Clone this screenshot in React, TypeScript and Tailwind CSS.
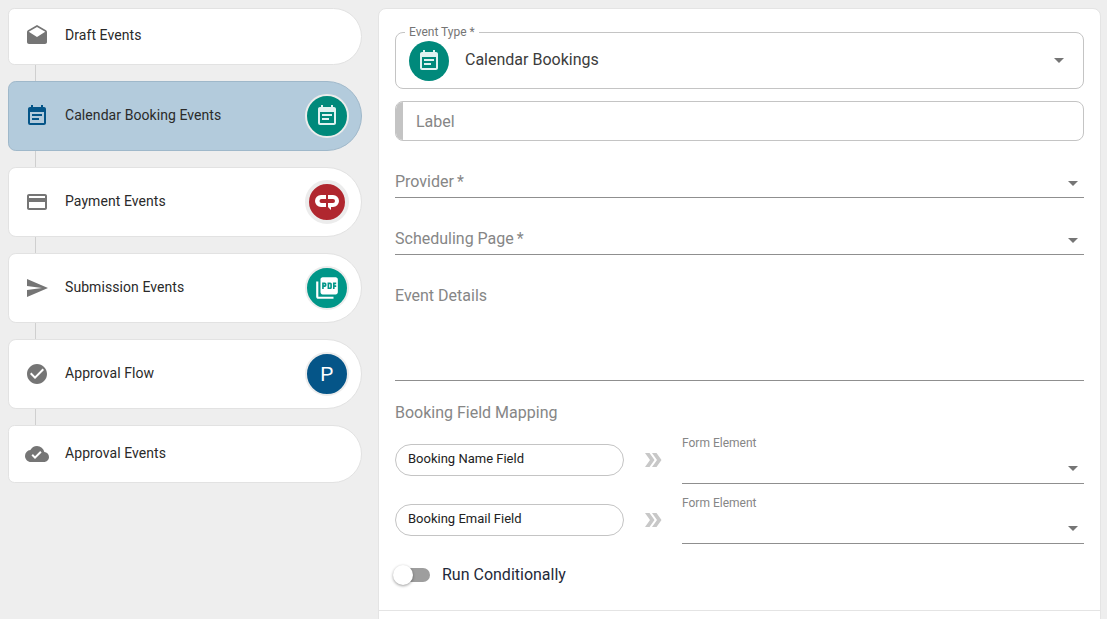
import { MdDrafts, MdEventNote, MdPayment, MdSend, MdCheckCircle, MdCloudDone, MdPictureAsPdf, MdDoubleArrow } from "react-icons/md";
import type { ReactNode } from "react";

function Caret({ className = "" }: { className?: string }) {
  return <span className={`w-0 h-0 border-l-[5px] border-r-[5px] border-t-[5px] border-l-transparent border-r-transparent border-t-[#757575] ${className}`} />;
}

function Badge({ color, children }: { color: string; children: ReactNode }) {
  return (
    <span className={`w-[44px] h-[44px] rounded-full border-2 border-[#ececec] flex items-center justify-center shrink-0 ${color}`}>
      {children}
    </span>
  );
}

function Step({ icon, label, heightClass, active, badge, lift }: { icon: ReactNode; label: string; heightClass: string; active?: boolean; badge?: ReactNode; lift?: boolean }) {
  return (
    <div className={`flex items-center pl-[15px] pr-[12px] border rounded-l-lg rounded-r-[36px] ${heightClass} ${lift ? "pb-[2px]" : ""} ${active ? "bg-[#b3cbdc] border-[#9fb8ca]" : "bg-white border-[#e2e2e2]"}`}>
      <span className="w-[26px] flex justify-center shrink-0">{icon}</span>
      <span className="ml-[15px] flex-1 text-[14px] leading-5 tracking-[0.07px] text-[#2a2a2a] font-normal -mt-[2px]">{label}</span>
      {badge}
    </div>
  );
}

function Connector() {
  return <div className="w-px h-[16px] ml-[27px] bg-[#cfcfcf]" />;
}

function UnderlineSelect({ label }: { label: string }) {
  return (
    <div className="flex items-end justify-between border-b border-[#8f8f8f] pr-[6px] pb-[5px] h-[41px]">
      <span className="text-[16px] leading-5 text-[#868686]">{label} <span className="-ml-[1px]">*</span></span>
      <Caret className="mb-[6px]" />
    </div>
  );
}

function MappingRow({ label }: { label: string }) {
  return (
    <div className="flex items-start h-[60px]">
      <div className="w-[229px] h-[32px] mt-[8px] border border-[#c4c4c4] rounded-full flex items-center pl-[12px] text-[13px] text-[#222] pb-[3px] shrink-0">{label}</div>
      <span className="w-[58px] mt-[12px] flex justify-center shrink-0"><MdDoubleArrow size={24} color="#c8c8c8" /></span>
      <div className="flex-1 h-[48px] border-b border-[#8f8f8f] flex flex-col justify-between pr-[6px]">
        <span className="text-[12px] leading-[14px] text-[#868686]">Form Element</span>
        <Caret className="self-end mb-[12px]" />
      </div>
    </div>
  );
}

export default function App() {
  const font = { fontFamily: "Roboto, sans-serif" };
  const grey = "#757575";
  return (
    <div style={font} className="h-[619px] w-[1107px] overflow-hidden bg-[#eeeeee] flex items-start pt-[8px] pl-[8px]">
      <div className="w-[354px] shrink-0 flex flex-col">
        <Step heightClass="h-[57px]" lift icon={<MdDrafts size={24} color={grey} />} label="Draft Events" />
        <Connector />
        <Step heightClass="h-[70px]" active icon={<MdEventNote size={24} color="#055588" />} label="Calendar Booking Events"
          badge={<Badge color="bg-[#00897b]"><MdEventNote size={24} color="#e0f2f1" /></Badge>} />
        <Connector />
        <Step heightClass="h-[70px]" icon={<MdPayment size={24} color={grey} />} label="Payment Events"
          badge={<span className="w-[44px] h-[44px] rounded-full border-[4px] border-[#ececec] flex items-center justify-center shrink-0 bg-[#b0272f]">
            <svg width="26" height="17" viewBox="0 0 26 17" fill="#fff">
              <path d="M12 1H7a6 6 0 0 0 0 12h5V9H7.5a2 2 0 0 1 0-4H12z" />
              <path d="M14 1h5a6 6 0 0 1 0 12h-2v3l-3-3V9h5a2 2 0 0 0 0-4h-5z" />
            </svg>
          </span>} />
        <Connector />
        <Step heightClass="h-[70px]" icon={<MdSend size={24} color={grey} />} label="Submission Events"
          badge={<Badge color="bg-[#009688]"><MdPictureAsPdf size={26} color="#fff" /></Badge>} />
        <Connector />
        <Step heightClass="h-[70px]" icon={<MdCheckCircle size={24} color={grey} />} label="Approval Flow"
          badge={<Badge color="bg-[#055588]"><span className="text-white text-[20px] leading-none font-['Liberation_Sans',sans-serif]">P</span></Badge>} />
        <Connector />
        <Step heightClass="h-[58px]" icon={<MdCloudDone size={24} color={grey} />} label="Approval Events" />
      </div>

      <div className="ml-[16px] w-[723px] h-[640px] shrink-0 bg-white border border-[#e4e4e4] rounded-t-lg flex flex-col">
        <div className="px-[16px] pt-[23px] flex flex-col">
          <div className="relative h-[57px] border border-[#c4c4c4] rounded-lg flex items-center pl-[13px] pr-[19px]">
            <span className="absolute left-[9px] -top-[8px] bg-white px-[4px] text-[12px] leading-[14px] text-[#757575]">Event Type *</span>
            <span className="w-[40px] h-[40px] rounded-full bg-[#00897b] flex items-center justify-center shrink-0"><MdEventNote size={24} color="#e0f2f1" /></span>
            <span className="ml-[16px] flex-1 text-[16px] text-[#3c3c3c] -mt-[2px]">Calendar Bookings</span>
            <Caret />
          </div>
          <div className="mt-[12px] h-[40px] border border-[#c4c4c4] rounded-lg flex items-center overflow-hidden">
            <span className="w-[7px] h-full bg-[#c4c4c4] shrink-0" />
            <span className="ml-[13px] pt-[2px] text-[16px] text-[#868686]">Label</span>
          </div>
          <div className="mt-[16px]"><UnderlineSelect label="Provider" /></div>
          <div className="mt-[16px]"><UnderlineSelect label="Scheduling Page" /></div>
          <div className="mt-[16px] h-[110px] border-b border-[#8f8f8f] pt-[15px]">
            <div className="text-[16px] leading-[20px] text-[#868686]">Event Details</div>
          </div>
          <div className="mt-[22px] text-[16px] leading-[20px] text-[#868686]">Booking Field Mapping</div>
          <div className="mt-[13px] flex flex-col">
            <MappingRow label="Booking Name Field" />
            <MappingRow label="Booking Email Field" />
          </div>
          <div className="mt-[4px] h-[30px] flex items-center">
            <span className="relative w-[35px] h-[14px] rounded-full bg-[#9e9e9e] shrink-0">
              <span className="absolute -left-[2px] -top-[3px] w-[20px] h-[20px] rounded-full bg-white shadow-[0_1px_3px_rgba(0,0,0,0.4)]" />
            </span>
            <span className="ml-[12px] text-[16px] text-[#1f2a3a]">Run Conditionally</span>
          </div>
        </div>
        <div className="mt-[20px] border-t border-[#e4e4e4]" />
      </div>
    </div>
  );
}
